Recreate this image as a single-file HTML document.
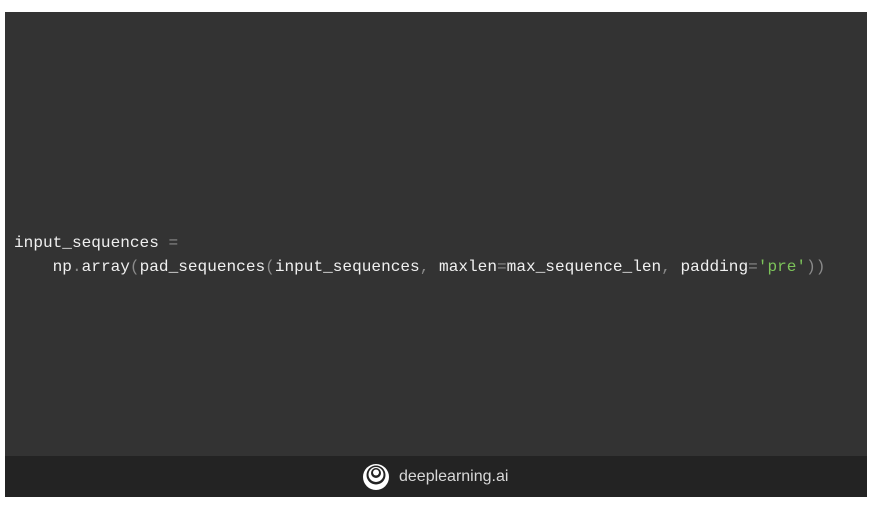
<!DOCTYPE html>
<html><head><style>
body{margin:0;width:876px;height:506px;background:#fff;position:relative;overflow:hidden}
.main{position:absolute;left:5px;top:12px;width:862px;height:444px;background:#333333}
.foot{position:absolute;left:5px;top:456px;width:862px;height:41px;background:#232323}
pre{position:absolute;left:14px;top:231px;margin:0;font-family:"Liberation Mono",monospace;font-size:16.1px;line-height:24px;color:#f0f0f0}
.p{color:#8a8a8a}.s{color:#7cc35a}
.logo{position:absolute;left:362px;top:463px;display:flex;align-items:center;font-family:"Liberation Sans",sans-serif;font-size:16px;color:#d8d8d8}
</style></head><body>
<div class="main"></div><div class="foot"></div>
<pre>input_sequences <span class="p">=</span>
    np<span class="p">.</span>array<span class="p">(</span>pad_sequences<span class="p">(</span>input_sequences<span class="p">,</span> maxlen<span class="p">=</span>max_sequence_len<span class="p">,</span> padding<span class="p">=</span><span class="s">'pre'</span><span class="p">))</span></pre>
<div class="logo"><svg width="30" height="28" viewBox="0 0 30 28"><circle cx="14" cy="14" r="13" fill="#fff"/><circle cx="14" cy="12" r="9.5" fill="#232323"/><circle cx="14" cy="11.5" r="7.5" fill="#fff"/><circle cx="14" cy="10" r="5" fill="#232323"/><circle cx="14" cy="9.5" r="3" fill="#fff"/></svg><span style="margin-left:7px">deeplearning.ai</span></div>
</body></html>
